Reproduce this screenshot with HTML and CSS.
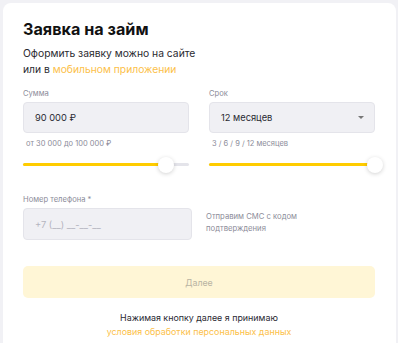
FILE: index.html
```html
<!DOCTYPE html>
<html lang="ru">
<head>
  <meta charset="UTF-8" />
  <meta name="viewport" content="width=device-width, initial-scale=1.0" />
  <title>Заявка на займ</title>
  <link rel="stylesheet" href="styles.css">
</head>
<body>
  <div class="page">
    <div class="loan-card">
      <h1 class="loan-title">Заявка на займ</h1>
      <p class="loan-sub">Оформить заявку можно на сайте<br>или в <a href="#" class="link">мобильном приложении</a></p>

      <div class="fields">
        <div class="field">
          <label class="field-label">Сумма</label>
          <div class="input-box">90 000 ₽</div>
          <div class="hint">от 30 000 до 100 000 ₽</div>
          <div class="slider">
            <div class="slider-fill" style="width: 86%"></div>
            <div class="slider-knob" style="left: 86%"></div>
          </div>
        </div>
        <div class="field">
          <label class="field-label">Срок</label>
          <div class="input-box select-box">
            12 месяцев
            <span class="caret"></span>
          </div>
          <div class="hint">3 / 6 / 9 / 12 месяцев</div>
          <div class="slider">
            <div class="slider-fill" style="width: 100%"></div>
            <div class="slider-knob" style="left: 100%"></div>
          </div>
        </div>
      </div>

      <label class="field-label phone-label">Номер телефона *</label>
      <div class="phone-row">
        <div class="input-box phone-box">+7 (__) __-__-__</div>
        <div class="phone-note">Отправим СМС с кодом<br>подтверждения</div>
      </div>

      <button class="next-btn" disabled>Далее</button>

      <p class="terms">Нажимая кнопку далее я принимаю<br><a href="#" class="link">условия обработки персональных данных</a></p>
    </div>
  </div>
</body>
</html>
```

FILE: styles.css
```css
body {
  margin: 0;
  background: #fff;
  font-family: Inter, 'Noto Sans', sans-serif;
  color: #1f1f24;
}
.page {
  background: #f1f1f5;
  padding: 3px 2px 0 3px;
  width: 393px;
  height: 340px;
}
.loan-card {
  background: #fff;
  border-radius: 8px 8px 0 0;
  height: 340px;
  padding: 15px 21px 0 20px;
  box-sizing: border-box;
}
.loan-title {
  margin: 0;
  font-size: 16.2px;
  line-height: 22px;
  font-weight: 700;
  color: #111;
}
.loan-sub {
  margin: 5px 0 0;
  font-size: 10.3px;
  line-height: 16px;
  color: #2a2a30;
}
.link {
  color: #fcbf4a;
  text-decoration: none;
}
.fields {
  display: grid;
  grid-template-columns: 1fr 1fr;
  gap: 20px;
  margin-top: 11px;
}
.field-label {
  display: block;
  font-size: 7.6px;
  line-height: 12px;
  color: #8c8c99;
  margin-bottom: 2px;
}
.input-box {
  height: 31px;
  box-sizing: border-box;
  background: #f0f0f4;
  border: 1px solid #e4e4ea;
  border-radius: 4px;
  padding: 0 11px;
  display: flex;
  align-items: center;
  font-size: 9.3px;
  color: #2a2a33;
}
.select-box {
  justify-content: space-between;
  padding-right: 10px;
}
.caret {
  width: 0;
  height: 0;
  border-left: 3.5px solid transparent;
  border-right: 3.5px solid transparent;
  border-top: 3.5px solid #777;
}
.hint {
  font-size: 7.5px;
  line-height: 12px;
  color: #8c8c99;
  margin: 5px 0 0 3px;
}
.slider {
  position: relative;
  height: 3px;
  background: #e4e4ea;
  margin-top: 13px;
  border-radius: 2px;
}
.slider-fill {
  height: 100%;
  background: #ffcc00;
  border-radius: 2px;
}
.slider-knob {
  position: absolute;
  top: 50%;
  width: 16px;
  height: 16px;
  margin: -8px 0 0 -8px;
  background: #fff;
  border-radius: 50%;
  box-shadow: 0 1px 4px rgba(0, 0, 0, 0.18);
}
.phone-label {
  margin-top: 28px;
}
.phone-row {
  display: flex;
  align-items: center;
  gap: 14px;
}
.phone-box {
  width: 169px;
  height: 32px;
  color: #b4b4bf;
}
.phone-note {
  font-size: 7.7px;
  line-height: 12px;
  color: #8c8c99;
  margin-top: -2px;
}
.next-btn {
  display: block;
  width: 100%;
  height: 32px;
  margin-top: 26px;
  border: none;
  border-radius: 5px;
  background: #fff6d6;
  color: #b9b4a3;
  font-family: inherit;
  font-size: 8.8px;
}
.terms {
  margin: 13px 0 0;
  text-align: center;
  font-size: 8.9px;
  line-height: 14px;
  color: #2a2a33;
}
```
